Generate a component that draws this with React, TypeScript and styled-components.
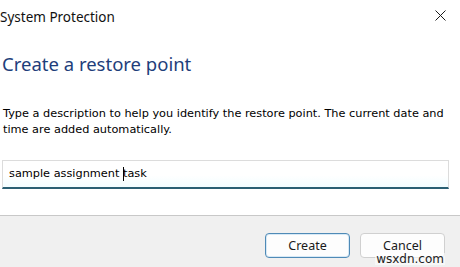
import React from 'react';
import styled, { createGlobalStyle } from 'styled-components';

const GlobalStyle = createGlobalStyle`
  html, body {
    margin: 0;
    padding: 0;
    background: #ffffff;
  }
  body {
    width: 460px;
    height: 267px;
    overflow: hidden;
  }
`;

const Dialog = styled.div`
  position: relative;
  width: 460px;
  height: 267px;
  display: flex;
  flex-direction: column;
  background: #ffffff;
  font-family: 'Noto Sans', 'Open Sans', sans-serif;
`;

const TitleBar = styled.div`
  height: 34px;
  display: flex;
  align-items: center;
  justify-content: space-between;
  padding: 0 13px 0 0;
`;

const Title = styled.span`
  font-size: 13.5px;
  color: #111111;
  margin-top: -1px;
`;

const CloseButton = styled.button`
  width: 14px;
  height: 14px;
  padding: 0;
  border: none;
  background: transparent;
  display: flex;
  align-items: center;
  justify-content: center;
  margin-top: -3px;
`;

const Content = styled.div`
  flex: 1;
  display: flex;
  flex-direction: column;
  padding: 0 11px 0 2px;
`;

const Heading = styled.h1`
  margin: 17px 0 0 0;
  font-size: 18.5px;
  font-weight: 400;
  color: #1e3e7b;
  line-height: 26px;
`;

const Description = styled.p`
  margin: 29px 0 0 1px;
  font-family: 'DejaVu Sans', sans-serif;
  font-size: 11.3px;
  line-height: 16px;
  color: #000000;
`;

const InputBox = styled.div`
  margin-top: 22px;
  height: 26px;
  border: 1px solid #dcdcdc;
  border-bottom: 2px solid #2a5f73;
  background: linear-gradient(#ffffff 0%, #ffffff 55%, #f2fdff 100%);
  display: flex;
  align-items: center;
  padding-left: 6px;
  font-family: 'DejaVu Sans', sans-serif;
  font-size: 11.3px;
  color: #000000;
`;

const InputText = styled.span`
  white-space: pre;
`;

const Caret = styled.span`
  display: inline-block;
  width: 1px;
  height: 14px;
  background: #000000;
  vertical-align: middle;
  margin: 0 -1px 0 0;
`;

const Footer = styled.div`
  height: 52px;
  border-top: 1px solid #c8c8c8;
  background: #f0f0f0;
  display: flex;
  justify-content: flex-end;
  align-items: flex-start;
  gap: 10px;
  padding: 17px 15px 0 0;
  box-sizing: border-box;
`;

const Button = styled.button<{ $primary?: boolean }>`
  width: 85px;
  height: 25px;
  border-radius: 4px;
  border: 1px solid ${(p) => (p.$primary ? '#4f8ab6' : '#d0d0d0')};
  box-shadow: ${(p) => (p.$primary ? 'inset 0 0 0 1px #d7e9f6' : 'none')};
  background: #fdfdfd;
  font-family: 'Noto Sans', 'Open Sans', sans-serif;
  font-size: 12.5px;
  color: #1a1a1a;
  padding: 0;
`;

const Watermark = styled.span`
  position: absolute;
  right: 15px;
  bottom: 2px;
  font-family: 'DejaVu Sans', sans-serif;
  font-size: 12px;
  color: #222222;
  background: rgba(255, 255, 255, 0.55);
  padding: 0 1px;
  line-height: 12px;
`;

export default function App() {
  return (
    <>
      <GlobalStyle />
      <Dialog>
        <TitleBar>
          <Title>System Protection</Title>
          <CloseButton aria-label="Close">
            <svg width="11" height="11" viewBox="0 0 11 11">
              <path d="M0.5 0.5 L10.5 10.5 M10.5 0.5 L0.5 10.5" stroke="#1a1a1a" strokeWidth="1" fill="none" />
            </svg>
          </CloseButton>
        </TitleBar>
        <Content>
          <Heading>Create a restore point</Heading>
          <Description>
            Type a description to help you identify the restore point. The current date and
            time are added automatically.
          </Description>
          <InputBox>
            <InputText>
              {'sample assignment '}
              <Caret />
              {'task'}
            </InputText>
          </InputBox>
        </Content>
        <Footer>
          <Button $primary>Create</Button>
          <Button>Cancel</Button>
        </Footer>
        <Watermark>wsxdn.com</Watermark>
      </Dialog>
    </>
  );
}
